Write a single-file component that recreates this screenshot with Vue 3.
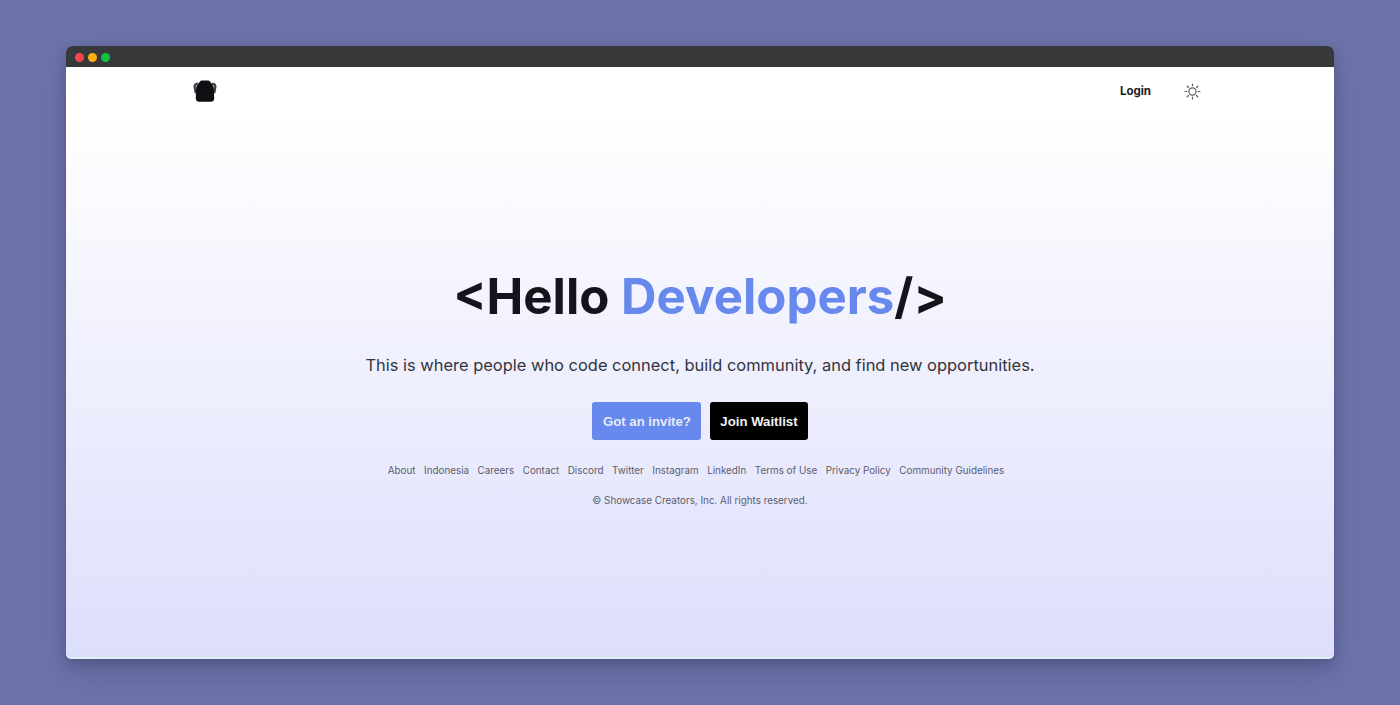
<template>
  <div class="page">
    <div class="window">
      <div class="titlebar">
        <span class="dot red"></span>
        <span class="dot yellow"></span>
        <span class="dot green"></span>
      </div>
      <div class="content">
        <header class="nav">
          <svg class="logo" width="24" height="22" viewBox="0 0 24 22">
            <path d="M5 2.500C1.800 2.700.300 4.500.500 6.800L1.700 13.500l1.500-.4-.4-6.300C2.700 5.600 3.700 4.800 4.800 4.600z" fill="#3c3d42" />
            <path d="M19 2.500c3.200.200 4.700 2 4.500 4.300l-1.200 6.700-1.500-.4.400-6.300c.100-1.200-.9-2-2-2.200z" fill="#3c3d42" />
            <path d="M8.800.500h6.400c.8 0 1.300.4 1.800 1l1.800 2.300c1.400 1.400 2 2.900 2.100 4.700l.3 9.700c0 2.300-1.300 3.600-3.300 3.600H6.100c-2 0-3.300-1.300-3.300-3.600l.3-9.700c.1-1.800.7-3.300 2.100-4.700L7 1.500c.5-.6 1-1 1.800-1z" fill="#0e0f12" />
          </svg>
          <div class="nav-right">
            <span class="login">Login</span>
            <svg class="sun" width="17" height="17" viewBox="0 0 24 24" fill="none" stroke="#5e5f66" stroke-width="1.700" stroke-linecap="round">
              <circle cx="12" cy="12" r="5" />
              <path d="M12 1.500v2.500M12 20v2.500M1.500 12H4M20 12h2.500M4.600 4.600l1.700 1.700M17.700 17.700l1.700 1.700M4.600 19.400l1.700-1.700M17.700 6.300l1.700-1.700" />
            </svg>
          </div>
        </header>
        <main class="hero">
          <h1 class="headline">&lt;Hello <span class="accent">Developers</span>/&gt;</h1>
          <p class="tagline">This is where people who code connect, build community, and find new opportunities.</p>
          <div class="actions">
            <button class="btn btn-invite">Got an invite?</button>
            <button class="btn btn-wait">Join Waitlist</button>
          </div>
          <nav class="links">
            <a v-for="link in links" :key="link">{{ link }}</a>
          </nav>
          <p class="copyright">© Showcase Creators, Inc. All rights reserved.</p>
        </main>
      </div>
    </div>
  </div>
</template>

<script setup>
const links = [
  'About',
  'Indonesia',
  'Careers',
  'Contact',
  'Discord',
  'Twitter',
  'Instagram',
  'LinkedIn',
  'Terms of Use',
  'Privacy Policy',
  'Community Guidelines'
]
</script>

<style>
html,
body {
  margin: 0;
  background: #6d74aa;
}
</style>

<style scoped>
.page {
  box-sizing: border-box;
  height: 705px;
  padding: 46px 66px;
  background: #6d74aa;
  overflow: hidden;
}

.window {
  height: 613px;
  border-radius: 7px 7px 5px 5px;
  overflow: hidden;
  display: flex;
  flex-direction: column;
  box-shadow: 0 4px 10px rgba(60, 64, 110, 0.35), 0 12px 30px rgba(60, 64, 110, 0.4);
}

.titlebar {
  flex: 0 0 21px;
  background: #37383a;
  display: flex;
  align-items: center;
  gap: 4px;
  padding: 2px 0 0 9px;
  box-sizing: border-box;
}

.dot {
  width: 9px;
  height: 9px;
  border-radius: 50%;
}
.red { background: #f4444e; }
.yellow { background: #fbb016; }
.green { background: #0fc23f; }

.content {
  flex: 1;
  display: flex;
  flex-direction: column;
  background: linear-gradient(180deg, #ffffff 8%, #dddefc 100%);
  border-bottom: 2px solid #e2eff5;
  font-family: Inter, "Liberation Sans", sans-serif;
}

.nav {
  display: flex;
  justify-content: space-between;
  align-items: center;
  height: 48px;
  padding: 0 133px 0 127px;
}

.logo {
  display: block;
}

.nav-right {
  display: flex;
  align-items: center;
  gap: 33px;
}

.login {
  font-size: 11.500px;
  font-weight: 700;
  color: #1b1c20;
  padding-bottom: 1px;
}

.hero {
  display: flex;
  flex-direction: column;
  align-items: center;
  padding-top: 149px;
}

.headline {
  margin: 0;
  font-size: 49.200px;
  line-height: 64px;
  font-weight: 700;
  color: #14151a;
}

.accent {
  color: #6788ec;
}

.tagline {
  margin: 23px 0 0;
  font-size: 16.450px;
  line-height: 28px;
  color: #33343b;
}

.actions {
  display: flex;
  gap: 9px;
  margin-top: 23px;
}

.btn {
  height: 38px;
  border: none;
  border-radius: 3px;
  font-family: "Liberation Sans", Arial, sans-serif;
  font-size: 13.200px;
  font-weight: 700;
}

.btn-invite {
  background: #6788ec;
  color: #e6ebfb;
  padding: 0 10.500px;
}

.btn-wait {
  background: #000;
  color: #f2f2f2;
  padding: 0 10px;
}

.links {
  display: flex;
  gap: 8.500px;
  margin-top: 22px;
  padding-right: 8px;
  font-size: 9.850px;
  line-height: 16px;
  color: #5b5d6c;
}

.copyright {
  margin: 14px 0 0;
  font-size: 9.850px;
  line-height: 16px;
  color: #5b5d6c;
}
</style>
